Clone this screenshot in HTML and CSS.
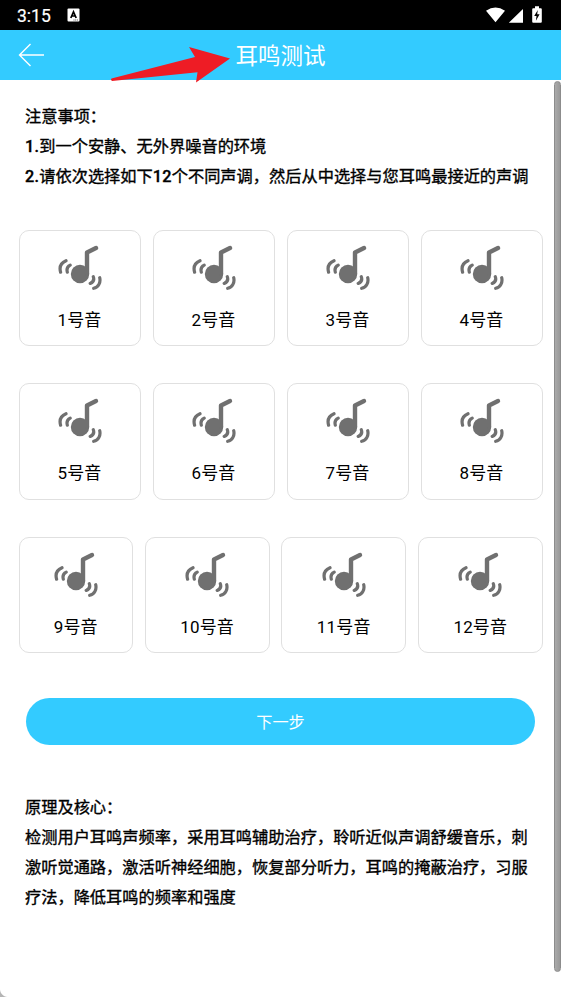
FILE: index.html
```html
<!DOCTYPE html>
<html lang="zh-CN">
<head>
<meta charset="utf-8">
<title>耳鸣测试</title>
<link rel="stylesheet" href="styles.css">
</head>
<body>
<svg class="defs" width="0" height="0" aria-hidden="true">
  <symbol id="note" viewBox="0 0 48 48">
    <circle cx="24" cy="32" r="9.2" fill="#707070"/>
    <g fill="none" stroke="#707070" stroke-linecap="round" stroke-linejoin="round">
      <path stroke-width="4.4" d="M31 32V10.5L40 6"/>
      <path stroke-width="3.2" d="M14.2 23.1Q10 25 11.3 30.2M10 18.7C5 20.8 3.2 25.2 4.6 30.2M37.3 34.7Q39 39.5 34.2 41.4M43.7 35.7C44.9 40.8 42.3 45.3 37.7 46.3"/>
    </g>
  </symbol>
</svg>
<header class="status">
  <span class="time">3:15</span>
  <svg class="app-icon" width="13" height="14" viewBox="0 0 13 14"><rect x=".5" y=".5" width="12" height="13" rx="1" fill="#fff"/><path d="M3.8 10 6.5 3.8 9.2 10M5 8h3" fill="none" stroke="#000" stroke-width="1.7"/><path d="M6.5 12h5" stroke="#555" stroke-dasharray="1 .7"/></svg>
  <svg class="indicators" width="58" height="18" viewBox="0 0 58 18"><path fill="#fff" d="M0 4.8Q9.5-1.8 19 4.8L9.5 16.3ZM37 3v13.7H22.8ZM46.2 3.2q0-1 1-1h1.8V.3h4v1.9h1.8q1 0 1 1v12.5q0 1-1 1h-7.6q-1 0-1-1Z"/><path fill="#000" d="m51.8 4-3.6 6h2.3l-.6 4.8 3.7-6.5h-2.4Z"/></svg>
</header>
<nav class="nav">
  <svg class="back" width="28" height="26" viewBox="0 0 28 26"><path d="M12.5 2 1.5 13l11 11M1.5 13H26" fill="none" stroke="#fff" stroke-width="1.4"/></svg>
  <h1>耳鸣测试</h1>
  <svg class="pointer" width="122" height="38" viewBox="0 0 122 38"><path fill="#ee1c25" d="M1.5 32.6 85 11 79 1 120 12.5 86 36.6 87.5 26.3 2 34.9Q0 33.8 1.5 32.6Z"/></svg>
</nav>
<main>
  <section class="notice">
    <p>注意事项：</p>
    <p><b>1.</b>到一个安静、无外界噪音的环境</p>
    <p><b>2.</b>请依次选择如下<b>12</b>个不同声调，然后从中选择与您耳鸣最接近的声调</p>
  </section>
  <section class="tones">
    <div class="row">
      <div class="card"><svg><use href="#note"/></svg><span>1号音</span></div>
      <div class="card"><svg><use href="#note"/></svg><span>2号音</span></div>
      <div class="card"><svg><use href="#note"/></svg><span>3号音</span></div>
      <div class="card"><svg><use href="#note"/></svg><span>4号音</span></div>
    </div>
    <div class="row">
      <div class="card"><svg><use href="#note"/></svg><span>5号音</span></div>
      <div class="card"><svg><use href="#note"/></svg><span>6号音</span></div>
      <div class="card"><svg><use href="#note"/></svg><span>7号音</span></div>
      <div class="card"><svg><use href="#note"/></svg><span>8号音</span></div>
    </div>
    <div class="row last">
      <div class="card"><svg><use href="#note"/></svg><span>9号音</span></div>
      <div class="card"><svg><use href="#note"/></svg><span>10号音</span></div>
      <div class="card"><svg><use href="#note"/></svg><span>11号音</span></div>
      <div class="card"><svg><use href="#note"/></svg><span>12号音</span></div>
    </div>
  </section>
  <button class="next" type="button">下一步</button>
  <section class="theory">
    <p>原理及核心：</p>
    <p>检测用户耳鸣声频率，采用耳鸣辅助治疗，聆听近似声调舒缓音乐，刺激听觉通路，激活听神经细胞，恢复部分听力，耳鸣的掩蔽治疗，习服疗法，降低耳鸣的频率和强度</p>
  </section>
</main>
<div class="scrollbar"></div>
<div class="corner"></div>
</body>
</html>
```
FILE: styles.css
```css
* { box-sizing: border-box; }
body {
  margin: 0;
  position: relative;
  height: 997px;
  overflow: hidden;
  background: #fff;
  color: #000;
  font-family: Roboto, "Noto Sans CJK SC", sans-serif;
}
.defs { position: absolute; }
.status {
  height: 30px;
  display: flex;
  align-items: center;
  padding: 0 17px;
  background: #000;
  color: #fff;
}
.time { font-size: 17.5px; font-weight: 400; line-height: 30px; padding-top: 2px; -webkit-text-stroke: .2px #fff; }
.app-icon { margin-left: 16px; }
.indicators { margin-left: auto; }
.nav {
  position: relative;
  height: 50px;
  display: flex;
  align-items: center;
  justify-content: center;
  background: #33cbff;
  color: #fff;
}
.back { position: absolute; left: 18px; top: 12px; }
.pointer { position: absolute; left: 110px; top: 16px; }
h1 { margin: 0; padding-top: 2px; font-size: 22.5px; line-height: 48px; font-weight: 400; }
main { padding: 22px 18px 0; }
p { margin: 0; }
.notice, .theory {
  padding: 0 7px;
  font-size: 16.23px;
  line-height: 30px;
  font-weight: 400;
  -webkit-text-stroke: .35px #000;
}
.notice { white-space: nowrap; }
.notice b { font-weight: 500; letter-spacing: .25px; }
.tones { margin-top: 38px; display: grid; gap: 37px; }
.row { display: grid; grid-template-columns: repeat(4, 122px); gap: 12px; margin-left: .5px; }
.row.last { grid-template-columns: 114.5px 125px 125px 125px; gap: 11.6px; }
.card {
  height: 116.3px;
  display: flex;
  flex-direction: column;
  align-items: center;
  padding-top: 11px;
  border: 1px solid #e0e0e0;
  border-radius: 10px;
}
.card svg { width: 48px; height: 48px; }
.card span { margin-top: 16px; font-size: 17px; line-height: 28px; letter-spacing: .15px; }
.next {
  display: block;
  width: 509px;
  height: 47px;
  margin: 45px 0 0 8px;
  border: 0;
  border-radius: 24px;
  background: #33cbff;
  color: #fff;
  font: 400 16.2px Roboto, "Noto Sans CJK SC", sans-serif;
}
.theory { margin-top: 48px; }
.scrollbar {
  position: absolute;
  left: 554px;
  top: 81px;
  width: 7px;
  height: 891px;
  border-radius: 4px;
  border: 1px solid #8c8c8c;
  background: linear-gradient(90deg, #aaa, #999);
}
.corner {
  position: absolute;
  left: 0;
  top: 989px;
  width: 8px;
  height: 8px;
  background: radial-gradient(circle at 8px 0, transparent 7.5px, #b5b5b5 8.5px);
}
```
